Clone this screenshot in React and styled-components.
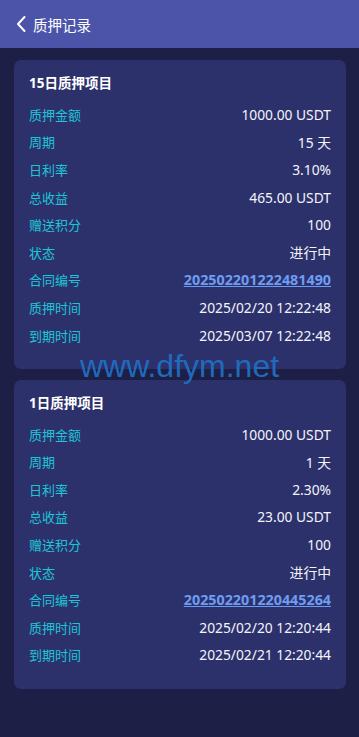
import React from 'react';
import styled, { createGlobalStyle } from 'styled-components';

const GlobalStyle = createGlobalStyle`
  html, body {
    margin: 0;
    padding: 0;
    background: #1e1f47;
  }
  body {
    font-family: "Noto Sans", "Noto Sans CJK SC", sans-serif;
  }
`;

const Page = styled.div`
  position: relative;
  min-height: 737px;
  background: #1e1f47;
  overflow: hidden;
`;

const Header = styled.div`
  height: 48px;
  background: #4c54a9;
  display: flex;
  align-items: center;
  padding-left: 15px;
  gap: 6px;
  color: #fff;
`;

const HeaderTitle = styled.div`
  font-size: 14.5px;
  font-family: "Noto Sans CJK SC", sans-serif;
  color: #ffffff;
`;

const List = styled.div`
  display: flex;
  flex-direction: column;
  gap: 11px;
  padding: 12px 13px 0 14px;
`;

const Card = styled.div`
  background: #2d316b;
  border-radius: 7px;
  padding: 13px 15px 20px 15px;
`;

const CardTitle = styled.div`
  font-size: 13.5px;
  font-weight: 700;
  line-height: 20px;
  color: #ffffff;
  margin-bottom: 7.5px;
  font-family: "Noto Sans", "Noto Sans CJK SC", sans-serif;
`;

const Row = styled.div`
  display: flex;
  justify-content: space-between;
  align-items: center;
  height: 27.6px;
  font-size: 13px;
`;

const Label = styled.span`
  color: #1cc6d8;
  font-family: "Noto Sans CJK SC", sans-serif;
`;

const Value = styled.span`
  color: #f4f5fb;
  font-size: 13.8px;
`;

const Contract = styled.a`
  color: #6d9df2;
  font-weight: 700;
  font-size: 14.3px;
  text-decoration: underline;
`;

const Watermark = styled.div`
  position: absolute;
  top: 350px;
  left: 0;
  right: 0;
  text-align: center;
  font-family: "Liberation Sans", Arial, sans-serif;
  font-size: 32px;
  line-height: 32px;
  color: #1f6fc2;
  opacity: 0.95;
  pointer-events: none;
`;

const records = [
  {
    title: '15日质押项目',
    amount: '1000.00 USDT',
    days: '15 天',
    rate: '3.10%',
    income: '465.00 USDT',
    points: '100',
    status: '进行中',
    contract: '202502201222481490',
    start: '2025/02/20 12:22:48',
    end: '2025/03/07 12:22:48',
  },
  {
    title: '1日质押项目',
    amount: '1000.00 USDT',
    days: '1 天',
    rate: '2.30%',
    income: '23.00 USDT',
    points: '100',
    status: '进行中',
    contract: '202502201220445264',
    start: '2025/02/20 12:20:44',
    end: '2025/02/21 12:20:44',
  },
];

function BackIcon() {
  return (
    <svg width="12" height="18" viewBox="0 0 12 18">
      <path d="M9.5 2 L3 9 L9.5 16" fill="none" stroke="#fff" strokeWidth="2" strokeLinecap="round" strokeLinejoin="round" />
    </svg>
  );
}

function RecordCard({ r }) {
  return (
    <Card>
      <CardTitle>{r.title}</CardTitle>
      <Row><Label>质押金额</Label><Value>{r.amount}</Value></Row>
      <Row><Label>周期</Label><Value>{r.days}</Value></Row>
      <Row><Label>日利率</Label><Value>{r.rate}</Value></Row>
      <Row><Label>总收益</Label><Value>{r.income}</Value></Row>
      <Row><Label>赠送积分</Label><Value>{r.points}</Value></Row>
      <Row><Label>状态</Label><Value>{r.status}</Value></Row>
      <Row><Label>合同编号</Label><Contract>{r.contract}</Contract></Row>
      <Row><Label>质押时间</Label><Value>{r.start}</Value></Row>
      <Row><Label>到期时间</Label><Value>{r.end}</Value></Row>
    </Card>
  );
}

export default function App() {
  return (
    <Page>
      <GlobalStyle />
      <Header>
        <BackIcon />
        <HeaderTitle>质押记录</HeaderTitle>
      </Header>
      <List>
        {records.map((r) => (
          <RecordCard key={r.contract} r={r} />
        ))}
      </List>
      <Watermark>www.dfym.net</Watermark>
    </Page>
  );
}
